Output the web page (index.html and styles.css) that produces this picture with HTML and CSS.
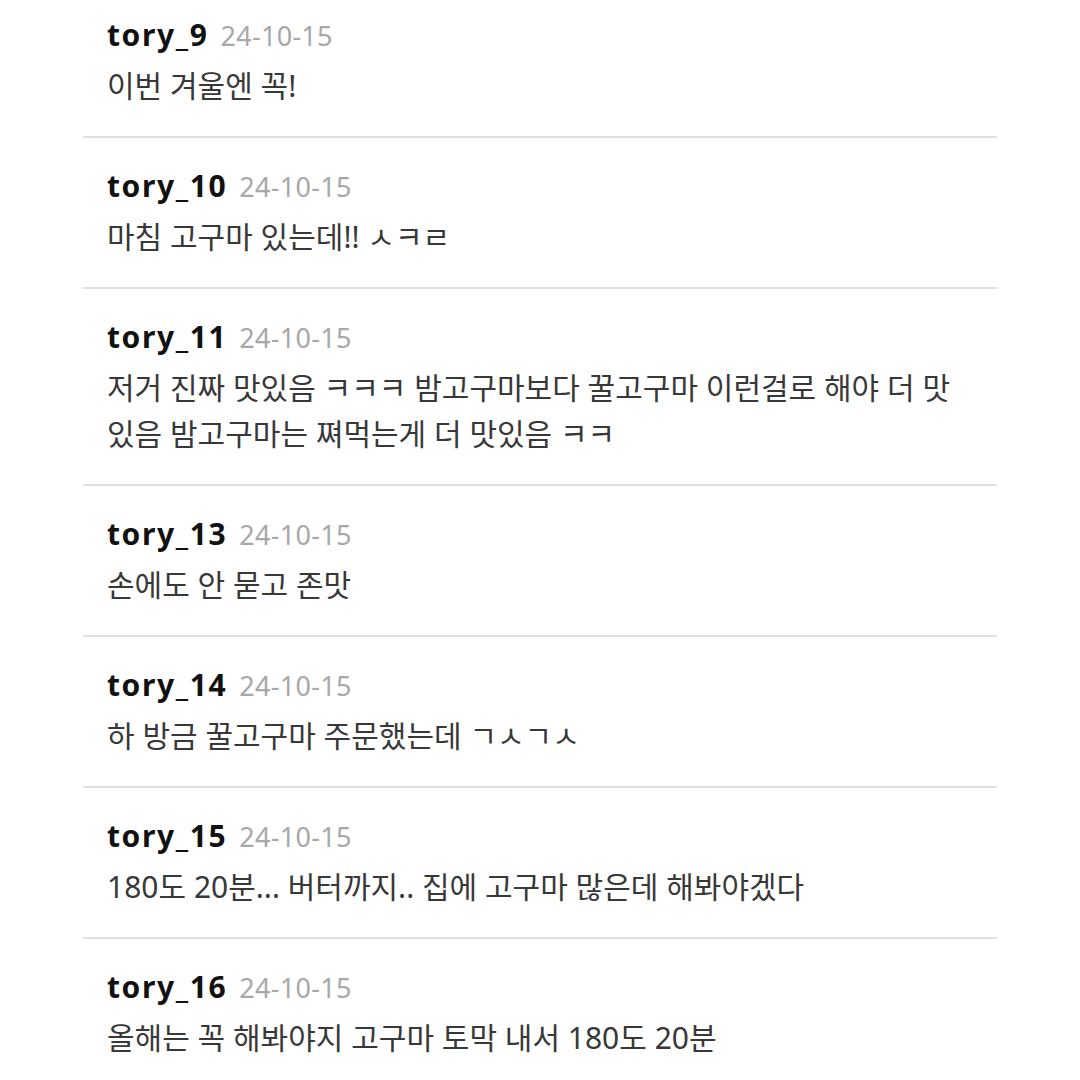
FILE: index.html
```html
<!DOCTYPE html>
<html lang="ko">
<head>
<meta charset="UTF-8" name="viewport" content="width=device-width, initial-scale=1.0">
<link rel="stylesheet" href="styles.css">
</head>
<body>
  <ul class="comment_list">
    <li class="comment">
      <div class="comment_head"><span class="nick">tory_9</span><span class="date">24-10-15</span></div>
      <p class="comment_text">이번 겨울엔 꼭!</p>
    </li>
    <li class="comment">
      <div class="comment_head"><span class="nick">tory_10</span><span class="date">24-10-15</span></div>
      <p class="comment_text">마침 고구마 있는데!! ㅅㅋㄹ</p>
    </li>
    <li class="comment">
      <div class="comment_head"><span class="nick">tory_11</span><span class="date">24-10-15</span></div>
      <p class="comment_text">저거 진짜 맛있음 ㅋㅋㅋ 밤고구마보다 꿀고구마 이런걸로 해야 더 맛있음 밤고구마는 쪄먹는게 더 맛있음 ㅋㅋ</p>
    </li>
    <li class="comment">
      <div class="comment_head"><span class="nick">tory_13</span><span class="date">24-10-15</span></div>
      <p class="comment_text">손에도 안 묻고 존맛</p>
    </li>
    <li class="comment">
      <div class="comment_head"><span class="nick">tory_14</span><span class="date">24-10-15</span></div>
      <p class="comment_text">하 방금 꿀고구마 주문했는데 ㄱㅅㄱㅅ</p>
    </li>
    <li class="comment">
      <div class="comment_head"><span class="nick">tory_15</span><span class="date">24-10-15</span></div>
      <p class="comment_text">180도 20분... 버터까지.. 집에 고구마 많은데 해봐야겠다</p>
    </li>
    <li class="comment">
      <div class="comment_head"><span class="nick">tory_16</span><span class="date">24-10-15</span></div>
      <p class="comment_text">올해는 꼭 해봐야지 고구마 토막 내서 180도 20분</p>
    </li>
  </ul>
</body>
</html>
```

FILE: styles.css
```css
body {
  margin: 0;
  background: #ffffff;
  font-family: "Noto Sans", "Noto Sans CJK KR", sans-serif;
}

.comment_list {
  list-style: none;
  margin: 0 0 0 83px;
  padding: 0;
  width: 914px;
}

.comment {
  padding: 28px 24px 27px 24px;
  border-bottom: 2px solid #e0e0e0;
}

.comment:first-child {
  padding-top: 15px;
}

.comment_head {
  display: flex;
  align-items: baseline;
  gap: 12px;
  height: 40px;
  line-height: 40px;
  margin-bottom: 8px;
}

.nick {
  font-size: 30px;
  font-weight: bold;
  letter-spacing: 1.6px;
  color: #111111;
}

.date {
  font-size: 27px;
  letter-spacing: 0.3px;
  color: #a8a8a8;
}

.comment_text {
  margin: 0;
  font-size: 30px;
  line-height: 46px;
  color: #383838;
}
```
